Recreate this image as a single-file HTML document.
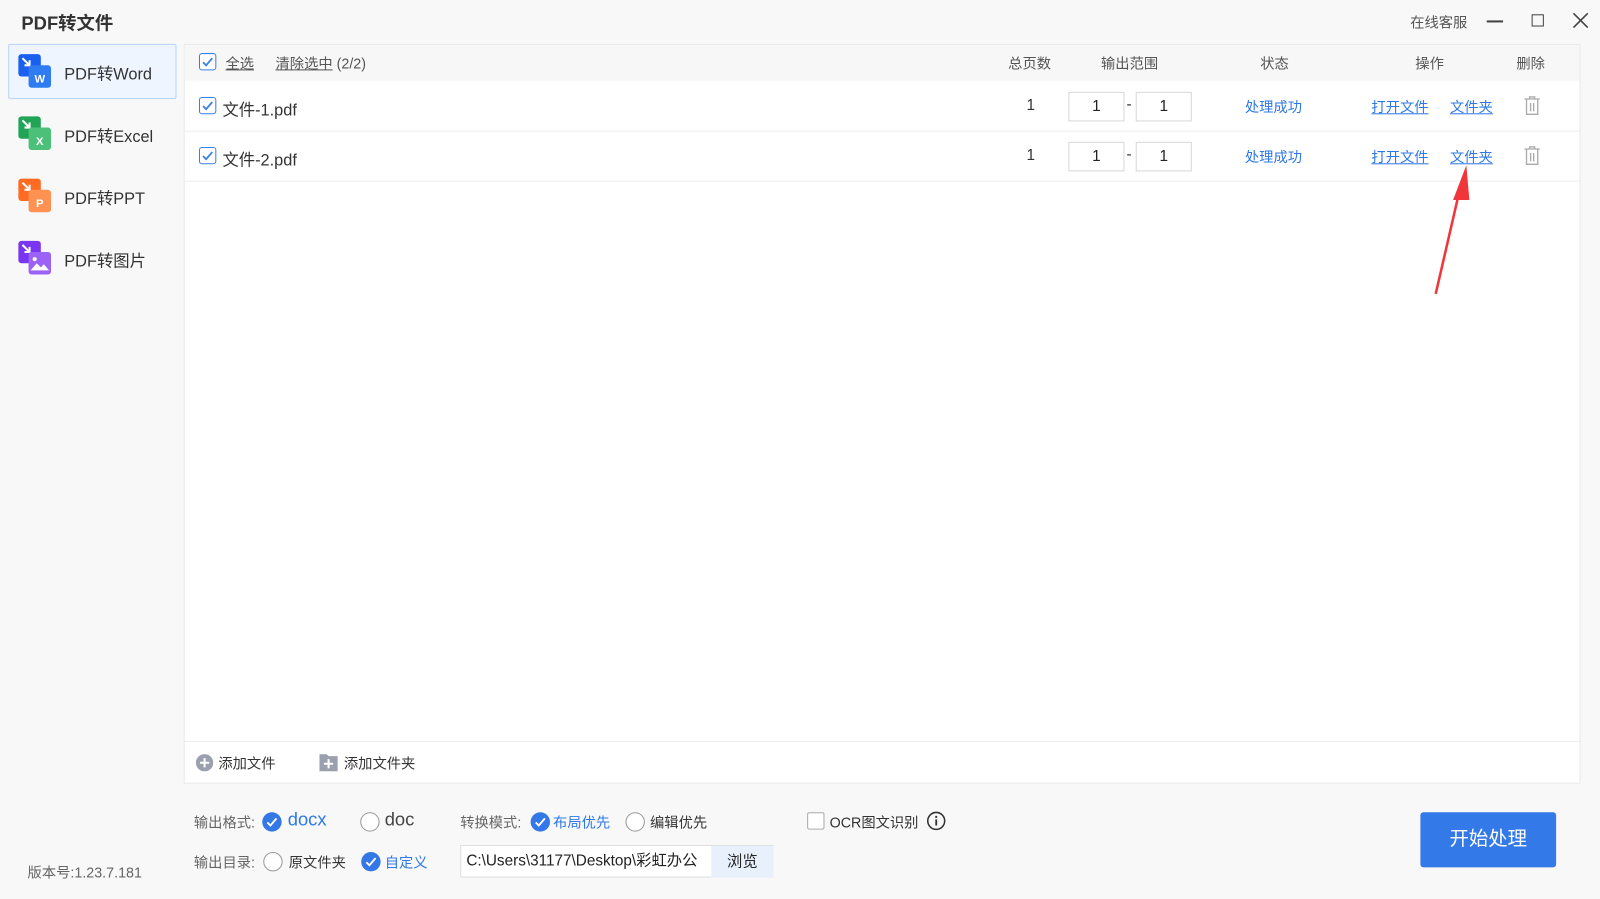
<!DOCTYPE html>
<html><head><meta charset="utf-8"><style>
*{margin:0;padding:0;box-sizing:border-box}
html,body{width:1600px;height:899px;background:#f8f8f9;overflow:hidden}
#w{position:absolute;left:0;top:0;width:1568px;height:881px;transform:scale(1.0204);transform-origin:0 0;font-family:"Liberation Sans","Noto Sans CJK SC",sans-serif;color:#333;font-size:14px}
.a{position:absolute;white-space:nowrap}
.cb{position:absolute;width:17px;height:17px;border:1.5px solid #3a7fe8;border-radius:3px;background:#fff}
.cb svg{position:absolute;left:1px;top:1px}
.lnk{color:#2f78e6;text-decoration:underline}
.inp{position:absolute;width:55px;height:29px;border:1px solid #d8d8d8;background:#fff;text-align:center;line-height:27px;font-size:15px;color:#222}
.rad{position:absolute;width:19px;height:19px;border-radius:50%;border:1.5px solid #999;background:#fff}
.radon{position:absolute;width:19px;height:19px;border-radius:50%;background:#3478e8}
.ico{position:absolute;width:36px;height:36px}
</style></head><body><div id="w">
<div class="a" style="left:21px;top:9px;font-size:18px;font-weight:bold;color:#333">PDF转文件</div>
<div class="a" style="left:1382px;top:12px;font-size:14px;color:#555">在线客服</div>
<div class="a" style="left:1457px;top:20px;width:16px;height:1.5px;background:#444"></div>
<div class="a" style="left:1501px;top:14px;width:12px;height:12px;border:1.5px solid #444"></div>
<svg class="a" style="left:1541px;top:12px" width="16" height="16"><path d="M1 1L15 15M15 1L1 15" stroke="#444" stroke-width="1.6"/></svg>

<div class="a" style="left:8px;top:43px;width:165px;height:54px;background:#eef5ff;border:1px solid #b9d4f7;border-radius:2px"></div>
<div class="a" style="left:63px;top:59px;font-size:16px">PDF转Word</div>
<div class="a" style="left:63px;top:120px;font-size:16px">PDF转Excel</div>
<div class="a" style="left:63px;top:181px;font-size:16px">PDF转PPT</div>
<div class="a" style="left:63px;top:242px;font-size:16px">PDF转图片</div>
<svg class="ico" style="left:17px;top:52px" viewBox="0 0 36 36"><rect x="1" y="1" width="22" height="22" rx="3" fill="#1a5ff0"/><path d="M5 5l7 7M12 7v5H7" stroke="#fff" stroke-width="2" fill="none"/><rect x="11" y="12" width="22" height="22" rx="3" fill="#2f7bf2"/><text x="22" y="29" font-size="11" font-weight="bold" fill="#fff" text-anchor="middle" font-family="Liberation Sans">W</text></svg>
<svg class="ico" style="left:17px;top:113px" viewBox="0 0 36 36"><rect x="1" y="1" width="22" height="22" rx="3" fill="#22a457"/><path d="M5 5l7 7M12 7v5H7" stroke="#fff" stroke-width="2" fill="none"/><rect x="11" y="12" width="22" height="22" rx="3" fill="#4cbf78"/><text x="22" y="29" font-size="11" font-weight="bold" fill="#fff" text-anchor="middle" font-family="Liberation Sans">X</text></svg>
<svg class="ico" style="left:17px;top:174px" viewBox="0 0 36 36"><rect x="1" y="1" width="22" height="22" rx="3" fill="#ff6b22"/><path d="M5 5l7 7M12 7v5H7" stroke="#fff" stroke-width="2" fill="none"/><rect x="11" y="12" width="22" height="22" rx="3" fill="#ff9152"/><text x="22" y="29" font-size="11" font-weight="bold" fill="#fff" text-anchor="middle" font-family="Liberation Sans">P</text></svg>
<svg class="ico" style="left:17px;top:235px" viewBox="0 0 36 36"><rect x="1" y="1" width="22" height="22" rx="3" fill="#7a35f0"/><path d="M5 5l7 7M12 7v5H7" stroke="#fff" stroke-width="2" fill="none"/><rect x="11" y="12" width="22" height="22" rx="3" fill="#9c62f5"/><circle cx="17" cy="19" r="2" fill="#fff"/><path d="M13 30l6-7 4 4 3-3 5 6z" fill="#fff"/></svg>
<div class="a" style="left:27px;top:845px;font-size:14px;color:#666">版本号:1.23.7.181</div>

<div class="a" style="left:180px;top:43px;width:1369px;height:725px;background:#fff;border:1px solid #e8e8e8"></div>
<div class="a" style="left:181px;top:44px;width:1367px;height:35px;background:#f7f7f7"></div>
<div class="cb" style="left:195px;top:52px"><svg width="13" height="13"><path d="M2 7l3 3 6-7" stroke="#3a7fe8" stroke-width="1.8" fill="none"/></svg></div>
<div class="a" style="left:221px;top:52px;font-size:14px;color:#555;text-decoration:underline">全选</div>
<div class="a" style="left:270px;top:52px;font-size:14px;color:#555"><u>清除选中</u> (2/2)</div>
<div class="a" style="left:988px;top:52px;font-size:14px;color:#555">总页数</div>
<div class="a" style="left:1079px;top:52px;font-size:14px;color:#555">输出范围</div>
<div class="a" style="left:1235px;top:52px;font-size:14px;color:#555">状态</div>
<div class="a" style="left:1387px;top:52px;font-size:14px;color:#555">操作</div>
<div class="a" style="left:1486px;top:52px;font-size:14px;color:#555">删除</div>

<div class="a" style="left:181px;top:128px;width:1367px;height:1px;background:#ececec"></div>
<div class="a" style="left:181px;top:177px;width:1367px;height:1px;background:#ececec"></div>

<div class="cb" style="left:195px;top:95px"><svg width="13" height="13"><path d="M2 7l3 3 6-7" stroke="#3a7fe8" stroke-width="1.8" fill="none"/></svg></div>
<div class="a" style="left:218px;top:94px;font-size:16px;color:#333">文件-1.pdf</div>
<div class="a" style="left:1006px;top:95px;font-size:15px">1</div>
<div class="inp" style="left:1047px;top:90px">1</div><div class="a" style="left:1104px;top:94px;font-size:15px">-</div><div class="inp" style="left:1113px;top:90px">1</div>
<div class="a" style="left:1220px;top:95px;font-size:14px;color:#2f78e6">处理成功</div>
<div class="a lnk" style="left:1344px;top:95px;font-size:14px">打开文件</div>
<div class="a lnk" style="left:1421px;top:95px;font-size:14px">文件夹</div>
<svg class="a" style="left:1493px;top:94px" width="17" height="19"><path d="M1 3h15M6 3V1h5v2M3 3v15h11V3M7 7v8M10 7v8" stroke="#aaa" stroke-width="1.3" fill="none"/></svg>

<div class="cb" style="left:195px;top:144px"><svg width="13" height="13"><path d="M2 7l3 3 6-7" stroke="#3a7fe8" stroke-width="1.8" fill="none"/></svg></div>
<div class="a" style="left:218px;top:143px;font-size:16px;color:#333">文件-2.pdf</div>
<div class="a" style="left:1006px;top:144px;font-size:15px">1</div>
<div class="inp" style="left:1047px;top:139px">1</div><div class="a" style="left:1104px;top:143px;font-size:15px">-</div><div class="inp" style="left:1113px;top:139px">1</div>
<div class="a" style="left:1220px;top:144px;font-size:14px;color:#2f78e6">处理成功</div>
<div class="a lnk" style="left:1344px;top:144px;font-size:14px">打开文件</div>
<div class="a lnk" style="left:1421px;top:144px;font-size:14px">文件夹</div>
<svg class="a" style="left:1493px;top:143px" width="17" height="19"><path d="M1 3h15M6 3V1h5v2M3 3v15h11V3M7 7v8M10 7v8" stroke="#aaa" stroke-width="1.3" fill="none"/></svg>

<svg class="a" style="left:1400px;top:160px" width="45" height="132"><path d="M7 128L31 24" stroke="#f0363a" stroke-width="2.5"/><path d="M37 2L24 36L40 36Z" fill="#f0363a"/></svg>

<div class="a" style="left:181px;top:726px;width:1367px;height:1px;background:#ececec"></div>
<svg class="a" style="left:192px;top:739px" width="17" height="17"><circle cx="8.5" cy="8.5" r="8.5" fill="#9aa0ad"/><path d="M8.5 4v9M4 8.5h9" stroke="#fff" stroke-width="2"/></svg>
<div class="a" style="left:214px;top:738px;font-size:14px">添加文件</div>
<svg class="a" style="left:313px;top:739px" width="18" height="17"><path d="M0 0h7l2 2h9v15H0z" fill="#9aa0ad"/><path d="M9 5v9M4.5 9.5h9" stroke="#fff" stroke-width="2"/></svg>
<div class="a" style="left:337px;top:738px;font-size:14px">添加文件夹</div>

<div class="a" style="left:190px;top:796px;font-size:14px;color:#666">输出格式:</div>
<div class="radon" style="left:257px;top:796px"><svg width="19" height="19"><path d="M5 10l3 3 6-7" stroke="#fff" stroke-width="1.8" fill="none"/></svg></div>
<div class="a" style="left:282px;top:793px;font-size:18px;color:#2f78e6">docx</div>
<div class="rad" style="left:353px;top:796px"></div>
<div class="a" style="left:377px;top:793px;font-size:18px;color:#444">doc</div>
<div class="a" style="left:451px;top:796px;font-size:14px;color:#666">转换模式:</div>
<div class="radon" style="left:520px;top:796px"><svg width="19" height="19"><path d="M5 10l3 3 6-7" stroke="#fff" stroke-width="1.8" fill="none"/></svg></div>
<div class="a" style="left:542px;top:796px;font-size:14px;color:#2f78e6">布局优先</div>
<div class="rad" style="left:613px;top:796px"></div>
<div class="a" style="left:637px;top:796px;font-size:14px;color:#333">编辑优先</div>
<div class="a" style="left:791px;top:796px;width:17px;height:17px;border:1.3px solid #aaa;border-radius:2px;background:#fff"></div>
<div class="a" style="left:813px;top:796px;font-size:14px;color:#333">OCR图文识别</div>
<svg class="a" style="left:908px;top:795px" width="19" height="19"><circle cx="9.5" cy="9.5" r="8.3" stroke="#333" stroke-width="1.5" fill="none"/><path d="M9.5 8v6" stroke="#333" stroke-width="1.8"/><circle cx="9.5" cy="5.5" r="1.1" fill="#333"/></svg>

<div class="a" style="left:190px;top:835px;font-size:14px;color:#666">输出目录:</div>
<div class="rad" style="left:258px;top:835px"></div>
<div class="a" style="left:283px;top:835px;font-size:14px;color:#333">原文件夹</div>
<div class="radon" style="left:354px;top:835px"><svg width="19" height="19"><path d="M5 10l3 3 6-7" stroke="#fff" stroke-width="1.8" fill="none"/></svg></div>
<div class="a" style="left:377px;top:835px;font-size:14px;color:#2f78e6">自定义</div>
<div class="a" style="left:451px;top:828px;width:307px;height:32px;border:1px solid #ddd;background:#fff;overflow:hidden"></div>
<div class="a" style="left:457px;top:832px;width:240px;overflow:hidden;font-size:15px;color:#222">C:\Users\31177\Desktop\彩虹办公</div>
<div class="a" style="left:697px;top:829px;width:61px;height:31px;background:#e8f0fc;text-align:center;line-height:31px;font-size:15px;color:#222">浏览</div>

<div class="a" style="left:1392px;top:796px;width:133px;height:54px;background:#3479e8;border-radius:3px;color:#fff;font-size:19px;text-align:center;line-height:54px">开始处理</div>
</div></body></html>
